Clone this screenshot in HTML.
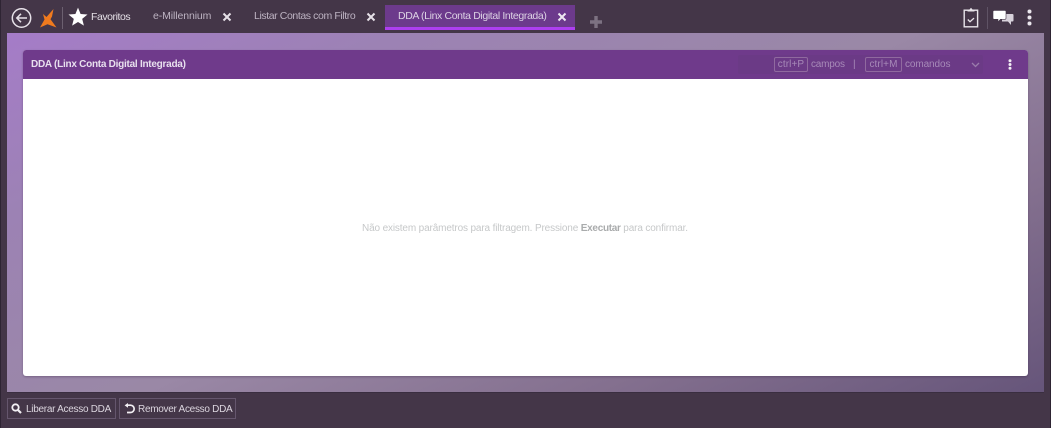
<!DOCTYPE html>
<html lang="pt">
<head>
<meta charset="utf-8">
<title>DDA</title>
<style>
html,body{margin:0;padding:0;width:1051px;height:428px;overflow:hidden;background:#443648}
body{position:relative;font-family:"Liberation Sans",sans-serif;}
.a{position:absolute;white-space:nowrap}
#root{position:absolute;left:0;top:0;width:1051px;height:428px;filter:blur(.35px)}
.edge{left:0;top:0;width:1px;height:428px;background:#2e2433}
.edge2{left:1050px;top:0;width:1px;height:428px;background:#2e2433}
#bg{left:7px;top:33px;width:1037px;height:359px;background:linear-gradient(155deg,#a57cc8 0%,#9c82b4 22%,#9a88a6 50%,#84708f 75%,#66557a 100%);border-bottom:1px solid #3a2e40}
#panel{left:23px;top:50px;width:1005px;height:326px;background:#fff;border-radius:3px;box-shadow:0 1px 2px rgba(50,30,60,.35)}
#phead{left:23px;top:50px;width:1005px;height:29px;background:#6f3a8b;border-radius:3px 3px 0 0}
.tab{font-size:10.5px;color:#bdb3c2;top:10px}
#active{left:385px;top:5px;width:190px;height:25px;background:#6c3a8c;box-sizing:border-box;border-bottom:3px solid #ad3ff0}
.kbd{border:1px solid #90699f;border-radius:2px;color:#a78ab8;font-size:10px;height:13px;line-height:13px;top:57px;text-align:center;letter-spacing:.1px}
.lbl{color:#a78ab8;font-size:10px;top:59px;letter-spacing:-.2px}
.btn{top:398px;height:21px;box-sizing:border-box;border:1px solid #65566d;background:#443648}
.btxt{top:404px;font-size:10px;color:#dcd6df;letter-spacing:-.28px}
</style>
</head>
<body>
<div id="root">
<div class="a edge"></div>
<div class="a edge2"></div>
<div class="a" id="bg"></div>
<div class="a" id="panel"></div>
<div class="a" id="phead"></div>

<!-- back icon -->
<svg class="a" style="left:11px;top:8px" width="22" height="22" viewBox="0 0 22 22" fill="none" stroke="#e6e1e8">
<circle cx="10.5" cy="10" r="9.2" stroke-width="1.5"/>
<path d="M16 10H6M10 5.8L5.8 10l4.2 4.2" stroke-width="1.5"/>
</svg>
<!-- logo -->
<svg class="a" style="left:38px;top:8px" width="20" height="21" viewBox="0 0 20 21">
<path d="M15.5 1L14 8.5L12.5 11.2L18.5 19.5L9.5 16.2L2 19.5L6.5 11.5L5 6L8.5 9Z" fill="#f07a1e"/>
</svg>
<div class="a" style="left:62px;top:7px;width:1px;height:22px;background:#6c6070"></div>
<!-- star -->
<svg class="a" style="left:68px;top:7px" width="20" height="20" viewBox="0 0 20 20">
<path d="M10 .6l2.6 6.4 6.9.5-5.3 4.4 1.7 6.7L10 15l-5.9 3.6 1.7-6.7L.5 7.5l6.9-.5z" fill="#fff"/>
</svg>
<div class="a" style="left:91px;top:11px;font-size:10.5px;letter-spacing:-.45px;color:#e4dfe6;">Favoritos</div>

<div class="a tab" style="left:153px;letter-spacing:-.1px">e-Millennium</div>
<svg class="a" style="left:222px;top:12px" width="10" height="10" viewBox="0 0 10 10"><path d="M1.5 1.5l7 7M8.5 1.5l-7 7" stroke="#e6e1e8" stroke-width="2"/></svg>
<div class="a tab" style="left:254px;letter-spacing:-.4px">Listar Contas com Filtro</div>
<svg class="a" style="left:366px;top:12px" width="10" height="10" viewBox="0 0 10 10"><path d="M1.5 1.5l7 7M8.5 1.5l-7 7" stroke="#e6e1e8" stroke-width="2"/></svg>
<div class="a" id="active"></div>
<div class="a tab" style="left:398px;color:#ddd3e4;letter-spacing:-.37px">DDA (Linx Conta Digital Integrada)</div>
<svg class="a" style="left:557px;top:12px" width="10" height="10" viewBox="0 0 10 10"><path d="M1.5 1.5l7 7M8.5 1.5l-7 7" stroke="#eee9f1" stroke-width="2"/></svg>
<svg class="a" style="left:590px;top:16px" width="12" height="12" viewBox="0 0 12 12"><path d="M6 0v12M0 6h12" stroke="#7d7282" stroke-width="3.4"/></svg>

<!-- right icons -->
<svg class="a" style="left:963px;top:7px" width="16" height="21" viewBox="0 0 16 21" fill="none">
<rect x="1.2" y="3.2" width="13.4" height="16.6" stroke="#e8e4ea" stroke-width="1.4"/>
<path d="M4.5 4.5V2.5H6.5L8 .8 9.5 2.5h2v2z" fill="#e8e4ea"/>
<path d="M4.8 12.5l2.2 2.2 4-3.6" stroke="#e8e4ea" stroke-width="1.3"/>
</svg>
<div class="a" style="left:987px;top:7px;width:1px;height:22px;background:#5f5365"></div>
<svg class="a" style="left:993px;top:10px" width="21" height="15" viewBox="0 0 21 15">
<path d="M9 4h10.5a1 1 0 0 1 1 1v5.5a1 1 0 0 1-1 1H18V15l-3-3.5H9z" fill="#d8d2db"/>
<path d="M1 .5h11a1 1 0 0 1 1 1v6.8a1 1 0 0 1-1 1H7.5L5 12V9.3H1a1 1 0 0 1-1-1V1.5a1 1 0 0 1 1-1z" fill="#fff" stroke="#443648" stroke-width=".6"/>
</svg>
<svg class="a" style="left:1027px;top:9px" width="5" height="17" viewBox="0 0 5 17" fill="#ebe7ed">
<circle cx="2.5" cy="2.5" r="2"/><circle cx="2.5" cy="8.5" r="2"/><circle cx="2.5" cy="14.5" r="2"/>
</svg>

<!-- panel head -->
<div class="a" style="left:31px;top:59px;font-size:10px;letter-spacing:-.26px;font-weight:bold;color:#e8e0ee;">DDA (Linx Conta Digital Integrada)</div>
<div class="a" style="left:738px;top:55px;width:245px;height:19px;background:#6b3a86;border-radius:2px"></div>
<div class="a kbd" style="left:774px;width:32px">ctrl+P</div>
<div class="a lbl" style="left:811px">campos</div>
<div class="a lbl" style="left:853px">|</div>
<div class="a kbd" style="left:865px;width:35px">ctrl+M</div>
<div class="a lbl" style="left:905px;letter-spacing:-.1px">comandos</div>
<svg class="a" style="left:971px;top:62px" width="9" height="6" viewBox="0 0 9 6" fill="none"><path d="M1 1l3.5 3.5L8 1" stroke="#9a7cab" stroke-width="1.3"/></svg>
<svg class="a" style="left:1008px;top:59px" width="4" height="11" viewBox="0 0 4 11" fill="#f1edf3">
<circle cx="2" cy="1.7" r="1.5"/><circle cx="2" cy="5.5" r="1.5"/><circle cx="2" cy="9.3" r="1.5"/>
</svg>

<!-- message -->
<div class="a" style="left:362px;top:223px;font-size:10px;color:#c6c8c9;letter-spacing:-.14px;">Não existem parâmetros para filtragem. Pressione <b style="color:#a9abac;letter-spacing:-.3px">Executar</b> para confirmar.</div>

<!-- bottom buttons -->
<div class="a btn" style="left:7px;width:109px"></div>
<svg class="a" style="left:11px;top:403px" width="11" height="11" viewBox="0 0 11 11" fill="none"><circle cx="4.5" cy="4.5" r="3.2" stroke="#f2eff3" stroke-width="1.8"/><path d="M7 7l3 3" stroke="#f2eff3" stroke-width="2.2"/></svg>
<div class="a btxt" style="left:26px">Liberar Acesso DDA</div>
<div class="a btn" style="left:119px;width:117px"></div>
<svg class="a" style="left:124px;top:403px" width="11" height="11" viewBox="0 0 11 11" fill="none"><path d="M3 2.2h3.5a3.6 3.6 0 0 1 0 7.3H3" stroke="#f2eff3" stroke-width="1.7"/><path d="M4 0L.6 2.4 4 4.8z" fill="#f2eff3"/></svg>
<div class="a btxt" style="left:138px">Remover Acesso DDA</div>
</div>
</body>
</html>
